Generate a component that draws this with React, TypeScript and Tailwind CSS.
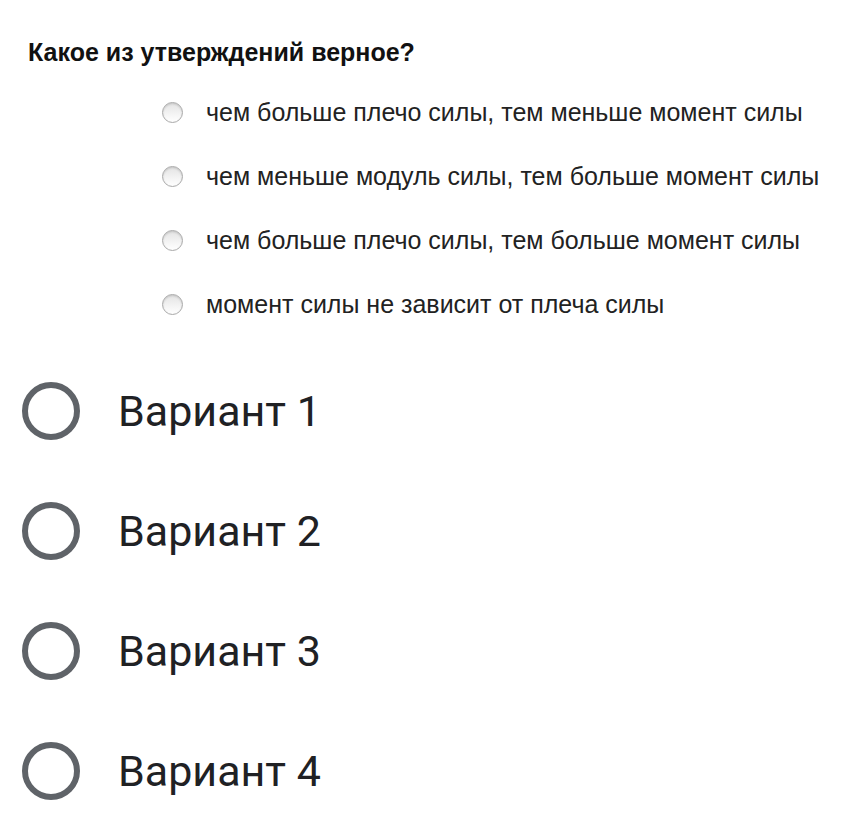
const options = [
  "чем больше плечо силы, тем меньше момент силы",
  "чем меньше модуль силы, тем больше момент силы",
  "чем больше плечо силы, тем больше момент силы",
  "момент силы не зависит от плеча силы",
];

const variants = ["Вариант 1", "Вариант 2", "Вариант 3", "Вариант 4"];

function SmallRadio() {
  return (
    <span className="w-[21px] h-[21px] rounded-full border border-[#a9a9a9] bg-gradient-to-b from-[#e4e4e4] to-[#ffffff] shadow-[inset_0_1px_2px_rgba(0,0,0,0.15)] shrink-0" />
  );
}

export default function App() {
  return (
    <div className="w-[864px] h-[822px] bg-white overflow-hidden">
      <div className="pt-[36px] pl-[28px] font-['Liberation_Sans',Arial,sans-serif]">
        <h1 className="text-[25px] font-bold text-[#111] leading-[32px]">
          Какое из утверждений верное?
        </h1>
        <div className="mt-[34px] ml-[134px] flex flex-col gap-[44px]">
          {options.map((o, i) => (
            <label key={i} className="flex items-center gap-[23px] h-[20px]">
              <SmallRadio />
              <span className="text-[25px] text-[#222] leading-none">{o}</span>
            </label>
          ))}
        </div>
      </div>
      <div className="mt-[68px] pl-[22px] flex flex-col gap-[62px] font-['Roboto',sans-serif]">
        {variants.map((v) => (
          <div key={v} className="flex items-center h-[58px]">
            <span className="w-[58px] h-[58px] rounded-full border-[6px] border-[#5f6368] shrink-0" />
            <span className="ml-[38px] text-[43px] text-[#202124] leading-none">{v}</span>
          </div>
        ))}
      </div>
    </div>
  );
}
